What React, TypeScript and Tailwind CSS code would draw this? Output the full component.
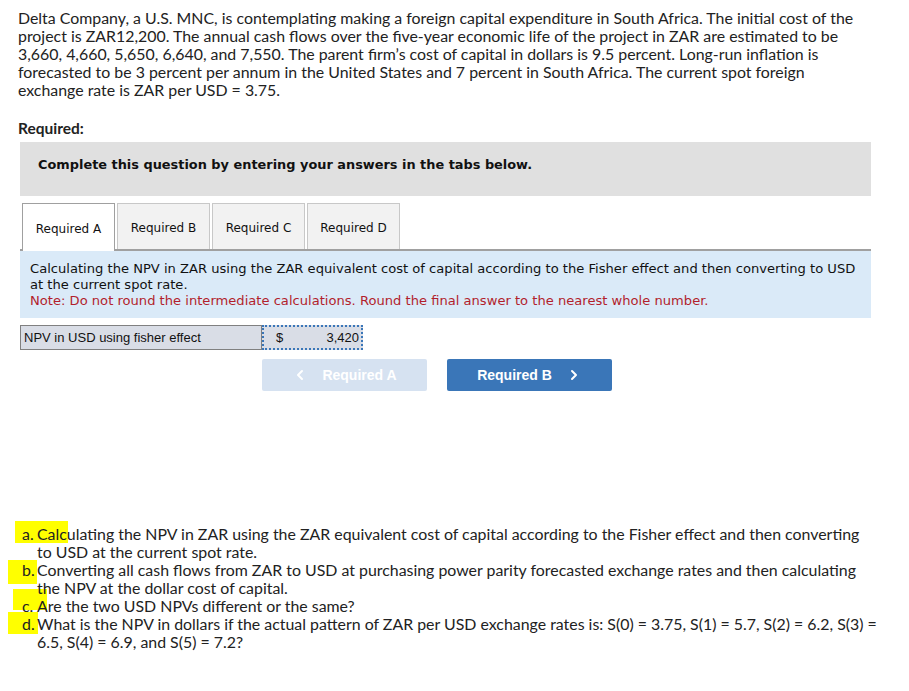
import { ChevronLeft, ChevronRight } from "lucide-react";

const tabs = ["Required A", "Required B", "Required C", "Required D"];

const parts = [
  {
    letter: "a.",
    lines: [
      "Calculating the NPV in ZAR using the ZAR equivalent cost of capital according to the Fisher effect and then converting",
      "to USD at the current spot rate.",
    ],
  },
  {
    letter: "b.",
    lines: [
      "Converting all cash flows from ZAR to USD at purchasing power parity forecasted exchange rates and then calculating",
      "the NPV at the dollar cost of capital.",
    ],
  },
  { letter: "c.", lines: ["Are the two USD NPVs different or the same?"] },
  {
    letter: "d.",
    lines: [
      "What is the NPV in dollars if the actual pattern of ZAR per USD exchange rates is: S(0) = 3.75, S(1) = 5.7, S(2) = 6.2, S(3) =",
      "6.5, S(4) = 6.9, and S(5) = 7.2?",
    ],
  },
];

const intro = [
  "Delta Company, a U.S. MNC, is contemplating making a foreign capital expenditure in South Africa. The initial cost of the",
  "project is ZAR12,200. The annual cash flows over the five-year economic life of the project in ZAR are estimated to be",
  "3,660, 4,660, 5,650, 6,640, and 7,550. The parent firm’s cost of capital in dollars is 9.5 percent. Long-run inflation is",
  "forecasted to be 3 percent per annum in the United States and 7 percent in South Africa. The current spot foreign",
  "exchange rate is ZAR per USD = 3.75.",
];

export default function App() {
  return (
    <main className="w-[909px] h-[691px] bg-white text-[#222] font-['Lato','Open_Sans',sans-serif]">
      <div className="pl-[18px] pr-[20px] pt-[9px]">
        <p className="text-[15.9px] leading-[18px] whitespace-nowrap">
          {intro.map((l) => (
            <span key={l} className="block">
              {l}
            </span>
          ))}
        </p>
        <p className="mt-[20px] text-[15.5px] font-bold leading-[18px]">Required:</p>
      </div>

      <div className="ml-[20px] mr-[38px] mt-[5px]">
        <div className="h-[54px] bg-[#e0e0e0] flex items-center pl-[18px] pb-[8px]">
          <span className="font-['DejaVu_Sans',Verdana,sans-serif] font-bold text-[12.9px] text-[#111]">
            Complete this question by entering your answers in the tabs below.
          </span>
        </div>

        <div className="mt-[7px] flex items-end gap-[2px] border-b-2 border-[#a0a0a0] pl-[2px]">
          {tabs.map((t, i) => (
            <div
              key={t}
              className={
                i === 0
                  ? "h-[48px] w-[93px] -mb-[2px] bg-white border border-b-0 border-[#a0a0a0] flex items-center justify-center pt-[2px] font-['DejaVu_Sans',Verdana,sans-serif] text-[12px] text-[#111]"
                  : "h-[46px] w-[93px] bg-[#f2f2f2] border border-b-0 border-[#c8c8c8] flex items-center justify-center pt-[2px] font-['DejaVu_Sans',Verdana,sans-serif] text-[12px] text-[#111]"
              }
            >
              {t}
            </div>
          ))}
        </div>

        <div className="bg-[#daeaf8] px-[10px] pt-[10px] pb-[9px] font-['DejaVu_Sans',Verdana,sans-serif] text-[13.1px] leading-[16px] text-[#111] whitespace-nowrap">
          <p>Calculating the NPV in ZAR using the ZAR equivalent cost of capital according to the Fisher effect and then converting to USD</p>
          <p>at the current spot rate.</p>
          <p className="text-[#b21f2d]">
            Note: Do not round the intermediate calculations. Round the final answer to the nearest whole number.
          </p>
        </div>

        <div className="mt-[7px] flex h-[25px] font-['Liberation_Sans',Arial,sans-serif] text-[13px] text-[#111]">
          <div className="w-[242px] bg-[#d9dde6] border border-[#808080] flex items-center pl-[3px]">
            NPV in USD using fisher effect
          </div>
          <div className="w-[101px] bg-[#d9dde6] border-2 border-dotted border-[#3a76b8] flex items-center justify-between pl-[12px] pr-[2px]">
            <span>$</span>
            <span>3,420</span>
          </div>
        </div>

        <div className="mt-[9px] flex gap-[20px] pl-[242px] font-['Liberation_Sans',Arial,sans-serif] text-[14px] font-bold text-white">
          <div className="w-[165px] h-[32px] rounded-[2px] bg-[#d6e2f1] flex items-center justify-center gap-[14px]">
            <ChevronLeft size={16} strokeWidth={3} />
            <span>Required A</span>
          </div>
          <div className="w-[165px] h-[32px] rounded-[2px] bg-[#3a76b8] flex items-center justify-center gap-[14px]">
            <span>Required B</span>
            <ChevronRight size={16} strokeWidth={3} />
          </div>
        </div>
      </div>

      <div className="relative mt-[134px] pl-[22px] pr-[20px] text-[15.9px] leading-[18px] whitespace-nowrap">
        <div className="absolute left-[15px] top-[-4px] w-[53px] h-[22px] bg-[#ffff00]" />
        <div className="absolute left-[8px] top-[35px] w-[29px] h-[24px] bg-[#ffff00]" />
        <div className="absolute left-[13px] top-[64px] w-[34px] h-[21px] bg-[#ffff00]" />
        <div className="absolute left-[8px] top-[87px] w-[30px] h-[22px] bg-[#ffff00]" />
        {parts.map((p) => (
          <div key={p.letter} className="relative flex">
            <span className="w-[15px] shrink-0">{p.letter}</span>
            <span>
              {p.lines.map((l) => (
                <span key={l} className="block">
                  {l}
                </span>
              ))}
            </span>
          </div>
        ))}
      </div>
    </main>
  );
}
